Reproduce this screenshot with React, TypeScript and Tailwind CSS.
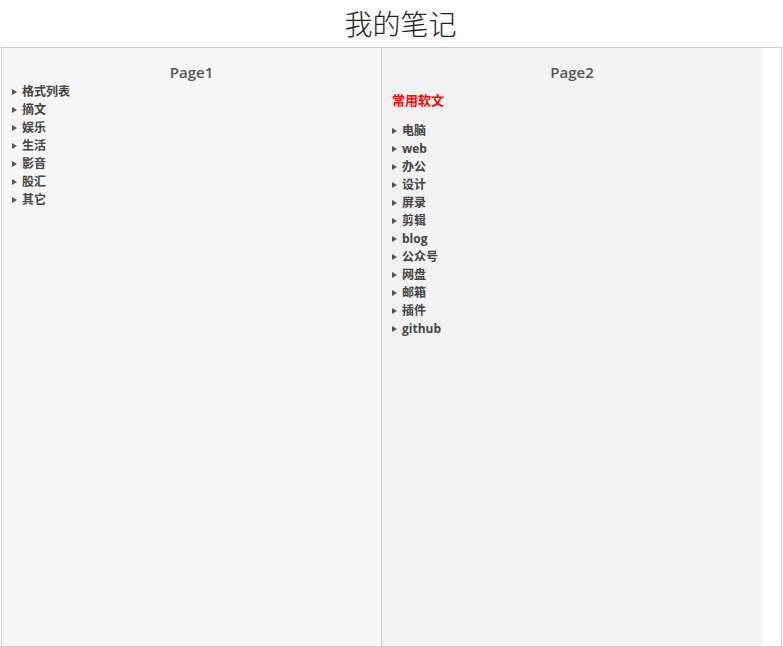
const page1 = ['格式列表', '摘文', '娱乐', '生活', '影音', '股汇', '其它'];
const page2 = ['电脑', 'web', '办公', '设计', '屏录', '剪辑', 'blog', '公众号', '网盘', '邮箱', '插件', 'github'];

const Item = ({ label }: { label: string }) => (
  <li className="flex items-center h-[18px]">
    <span className="w-0 h-0 border-y-[3.5px] border-y-transparent border-l-[5px] border-l-[#555] mr-[5px]"></span>
    <span className="text-[12px] font-bold text-[#444]">{label}</span>
  </li>
);

const App = () => {
  return (
    <div className="bg-white min-h-screen" style={{ fontFamily: '"Open Sans", "Noto Sans CJK SC", sans-serif' }}>
      <h1 className="h-[47px] flex items-center justify-center text-[28px] font-light text-[#222] pl-[18px] pt-[1px]">
        我的笔记
      </h1>
      <div className="mx-[1px] h-[600px] border border-[#ccc] flex">
        <section className="w-[380px] border-r border-[#ccc] bg-[#f6f6f6] pt-[14px] pl-[10px]">
          <h2 className="h-[20px] leading-[20px] text-center text-[15px] font-semibold text-[#555] pr-[10px]">Page1</h2>
          <ul className="mt-[1px]">
            {page1.map((t) => (
              <Item key={t} label={t} />
            ))}
          </ul>
        </section>
        <section className="w-[380px] bg-[#f2f2f2] pt-[14px] pl-[10px]">
          <h2 className="h-[20px] leading-[20px] text-center text-[15px] font-semibold text-[#555] pr-[10px]">Page2</h2>
          <div className="mt-[9px] h-[18px] leading-[18px] text-[13px] font-bold text-[#ff0000]">常用软文</div>
          <ul className="mt-[13px]">
            {page2.map((t) => (
              <Item key={t} label={t} />
            ))}
          </ul>
        </section>
      </div>
    </div>
  );
};

export default App;
